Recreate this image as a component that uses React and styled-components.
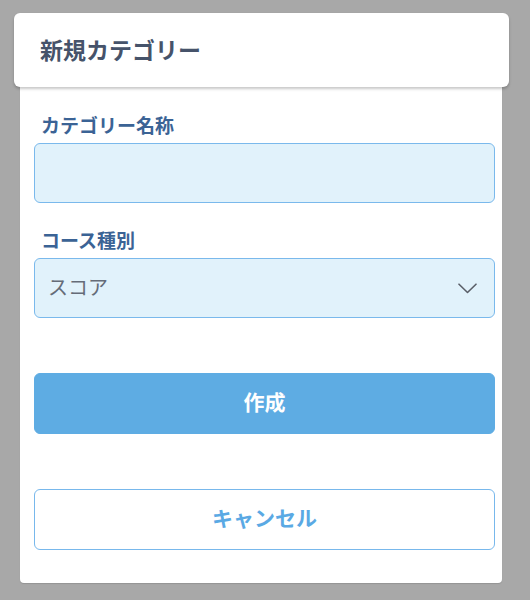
import React from "react";
import styled, { createGlobalStyle } from "styled-components";

const Global = createGlobalStyle`
  html, body { margin: 0; padding: 0; background: #a8a8a8; }
  body { font-family: "Noto Sans CJK JP", "Noto Sans", sans-serif; }
  * { box-sizing: border-box; }
`;

const Page = styled.div`
  padding: 13px 21px 0 14px;
  width: 530px;
  height: 600px;
`;

const Header = styled.div`
  width: 495px;
  height: 74px;
  background: #fff;
  border-radius: 6px;
  box-shadow: 0 2px 3px rgba(0, 0, 0, 0.22);
  display: flex;
  align-items: center;
  padding-left: 26px;
  padding-bottom: 3px;
  position: relative;
  z-index: 1;
`;

const Title = styled.h1`
  margin: 0;
  font-size: 23px;
  font-weight: 700;
  color: #46536a;
`;

const Panel = styled.div`
  margin: 0 7px 0 6px;
  width: 482px;
  height: 496px;
  background: #fff;
  border-radius: 0 0 4px 4px;
  box-shadow: 0 1px 1px rgba(0, 0, 0, 0.12);
  padding: 25px 7px 0 14px;
  display: flex;
  flex-direction: column;
`;

const Field = styled.div`
  display: flex;
  flex-direction: column;
  & + & { margin-top: 24px; }
`;

const Label = styled.label`
  font-size: 19px;
  line-height: 26px;
  font-weight: 700;
  color: #3b6395;
  margin-bottom: 5px;
  padding-left: 7px;
`;

const Input = styled.input`
  height: 60px;
  width: 461px;
  background: #e1f2fb;
  border: 1.5px solid #7ab9ec;
  border-radius: 6px;
  outline: none;
  padding: 0 14px;
  font-family: inherit;
  font-size: 20px;
`;

const SelectBox = styled.div`
  height: 60px;
  width: 461px;
  background: #e1f2fb;
  border: 1.5px solid #7ab9ec;
  border-radius: 6px;
  display: flex;
  align-items: center;
  justify-content: space-between;
  padding: 0 17px 0 13px;
`;

const SelectText = styled.span`
  font-size: 20px;
  color: #656c78;
  margin-top: -4px;
`;

const Button = styled.button`
  margin-top: 55px;
  height: 61px;
  width: 461px;
  border-radius: 6px;
  font-family: inherit;
  font-size: 21px;
  font-weight: 700;
  padding: 0 0 6px;
  border: 1.5px solid ${(p) => (p.$primary ? "#5eace3" : "#78b8ec")};
  background: ${(p) => (p.$primary ? "#5eace3" : "#ffffff")};
  color: ${(p) => (p.$primary ? "#ffffff" : "#5aa9e4")};
  cursor: pointer;
`;

const Chevron = () => (
  <svg width="19" height="11" viewBox="0 0 19 11" fill="none">
    <path d="M1 1.2 L9.5 9.5 L18 1.2" stroke="#5a5f68" strokeWidth="1.6" strokeLinecap="round" strokeLinejoin="round" />
  </svg>
);

export default function App() {
  return (
    <>
      <Global />
      <Page>
        <Header>
          <Title>新規カテゴリー</Title>
        </Header>
        <Panel>
          <Field>
            <Label>カテゴリー名称</Label>
            <Input type="text" />
          </Field>
          <Field>
            <Label>コース種別</Label>
            <SelectBox>
              <SelectText>スコア</SelectText>
              <Chevron />
            </SelectBox>
          </Field>
          <Button $primary>作成</Button>
          <Button>キャンセル</Button>
        </Panel>
      </Page>
    </>
  );
}
